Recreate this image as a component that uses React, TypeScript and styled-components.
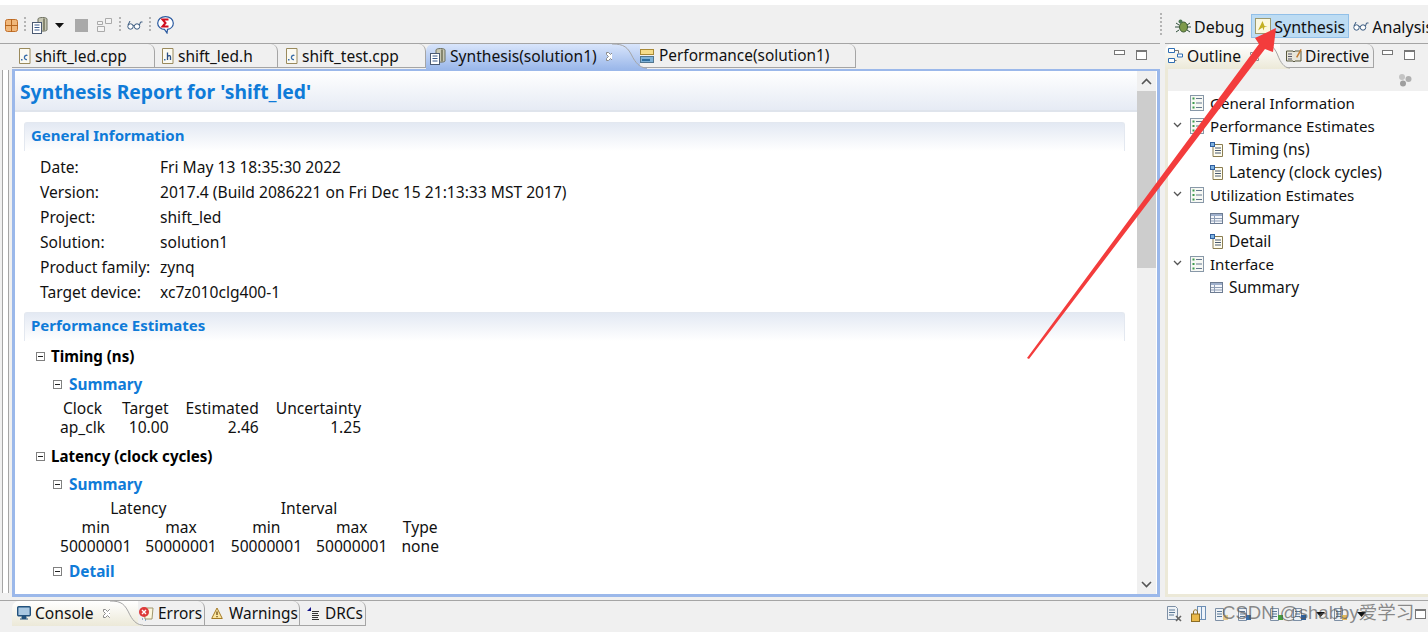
import React from "react";
import styled, { createGlobalStyle } from "styled-components";

const Global = createGlobalStyle`
  html, body { margin: 0; padding: 0; background: #fff; overflow: hidden; }
  * { box-sizing: border-box; }
`;

const FONT = `"Noto Sans", "Open Sans", "Noto Sans CJK SC", sans-serif`;

const Page = styled.div`
  position: relative;
  width: 1428px;
  height: 632px;
  overflow: hidden;
  display: flex;
  flex-direction: column;
  background: #f0f0f0;
  font-family: ${FONT};
  font-size: 15.6px;
  color: #111;
`;
const TopGap = styled.div`height: 5px; background: #fff; flex: none;`;
const Toolbar = styled.div`
  height: 38px; flex: none; display: flex; align-items: center; padding: 2px 0 0 5px;
`;
const ToolGroup = styled.div`display: flex; align-items: center; gap: 6px; height: 100%;`;
const Grip = styled.span`
  width: 2px; height: ${p => p.$h ?? 16}px; flex: none;
  background: repeating-linear-gradient(#b4b4b4 0 2px, transparent 2px 4px);
`;
const Nudge = styled.span`display: flex; align-items: center; margin-left: ${p => p.$l}px;`;
const Perspectives = styled.div`
  margin-left: auto; display: flex; align-items: center; height: 100%; width: 268px;
`;
const Persp = styled.div`
  display: flex; align-items: center; gap: 3px; height: 24px; flex: none; white-space: nowrap; font-size: 16px;
  padding: 0 ${p => p.$pad ?? 1}px;
  margin-left: ${p => p.$ml ?? 0}px;
  margin-top: 1px;
  ${p => p.$on ? "background:#bddcf3;border:1px solid #92c0e8;" : ""}
`;
const PerspLabel = styled.span`padding-top: 3px;`;
const Main = styled.div`flex: 1; display: flex; min-height: 0;`;
const LeftSliver = styled.div`
  width: 12px; flex: none; border-top: 1px solid #a5a5a5;
  position: relative; background: #f0f0f0;
  &::after { content: ""; position: absolute; left: 2px; top: 26px; bottom: 4px; width: 5px;
    border-left: 1px solid #a5a5a5; border-right: 1px solid #a5a5a5; background:#fff; }
`;
const Editor = styled.div`
  width: 1148px; flex: none; display: flex; flex-direction: column;
`;
const TabBar = styled.div`
  height: 26px; flex: none; display: flex; align-items: stretch; position: relative;
  border-top: 1px solid #a5a5a5;
  background: #f0f0f0;
`;
const Tab = styled.div`
  width: ${p => p.$w}px; flex: none; display: flex; align-items: center; gap: ${p => p.$gap ?? 4}px;
  padding-left: ${p => p.$pl ?? 6}px; white-space: nowrap; font-size: ${p => p.$size ?? 15.6}px; height: 24px;
  border-right: 1px solid #a5a5a5; border-bottom: 1px solid #a5a5a5; border-top-right-radius: 7px;
`;
const ActiveTab = styled.div`
  width: ${p => p.$w}px; flex: none; display: flex; align-items: center; gap: 3px; padding: 0 0 1px ${p => p.$pl ?? 4}px;
  white-space: nowrap; font-size: 15.6px; position: relative; height: 25px;
  border-top-left-radius: 7px; 
  background: linear-gradient(${p => p.$from}, ${p => p.$to});
`;
const CurveSvg = styled.svg`position: absolute; right: ${p => p.$r}px; top: 0;`;
const Close = styled.svg`flex: none; margin-left: 5px;`;
const WinBtns = styled.div`
  margin-left: auto; display: flex; align-items: center; gap: 11px; padding-right: 13px; height: 22px;
`;
const MinBtn = styled.span`width: 11px; height: 5px; border: 1px solid #777; background: #fff; display:block; margin-top:-5px;`;
const MaxBtn = styled.span`width: 11px; height: 10px; border: 1px solid #777; border-top-width: 2px; background:#fff; display:block; flex: none;`;
const EditorBody = styled.div`
  flex: 1; min-height: 0; display: flex; border: 3px solid #9bb8ea; border-top-width: 2px; background: #fff;
`;
const Report = styled.div`flex: 1; min-width: 0; overflow: hidden; background: #fff;`;
const Scrollbar = styled.div`
  width: 19px; flex: none; background: #f0f0f0; display: flex; flex-direction: column; align-items: center; margin-right: 1px;
`;
const ScrollBtn = styled.div`height: 20px; display: flex; align-items: center; justify-content: center; flex: none;`;
const Thumb = styled.div`width: 19px; height: 177px; background: #cdcdcd; flex: none;`;
const Spacer = styled.div`flex: 1;`;
const ReportTitle = styled.h1`
  margin: 0; height: 41px; padding: 1px 0 0 5px; display: flex; align-items: center;
  font-size: 19.3px; font-weight: 700; color: #0f7bd8;
  background: linear-gradient(#fff, #e6ebf4);
  border-bottom: 2px solid #dfe4ec; 
`;
const Section = styled.section`padding: 0 12px 0 9px; margin-top: 10px;`;
const SectionHead = styled.h2`
  margin: 0; height: 29px; padding: 0 0 4px 6px; display: flex; align-items: center;
  font-size: 15px; font-weight: 700; color: #0f7bd8;
  border: 1px solid #e3e8f0; border-bottom: none; border-radius: 3px 3px 0 0;
  background: linear-gradient(#e3e9f3, #fff);
`;
const InfoGrid = styled.div`
  display: grid; grid-template-columns: 120px auto; grid-auto-rows: 25px; align-items: center;
  padding: 3px 0 8px 16px; 
`;
const Span = styled.span`white-space: nowrap;`;
const Heading = styled.div`
  display: flex; align-items: center; gap: ${p => p.$blue ? 7 : 6}px; font-weight: 700; font-size: ${p => p.$blue ? 15.4 : 15.1}px; white-space: nowrap;
  height: 20px; margin-left: ${p => p.$ml}px; margin-top: ${p => p.$mt}px;
  color: ${p => p.$blue ? "#0f7bd8" : "#000"};
`;
const Toggle = styled.span`
  width: 9px; height: 9px; border: 1px solid #808080; position: relative; flex: none; background: #fff;
  &::after { content: ""; position: absolute; left: 1px; right: 1px; top: 3px; height: 1px; background: #222; }
`;
const DataTable = styled.table`
  border-collapse: separate; border-spacing: 0; margin: ${p => p.$mt}px 0 0 45px; font-size: 15.6px; line-height: 19px;
  th { font-weight: 400; text-align: center; padding: 0 0 0 ${p => p.$sp}px; white-space: nowrap; }
  td { text-align: right; padding: 0 0 0 ${p => p.$sp}px; white-space: nowrap; }
  th:first-child, td:first-child { padding-left: 0; }
  td.c { text-align: center; }
`;
const Sash = styled.div`width: 5px; flex: none;`;
const Side = styled.div`flex: 1; min-width: 0; display: flex; flex-direction: column;`;
const SideBody = styled.div`
  flex: 1; min-height: 0; display: flex; flex-direction: column; background: #fff;
  border-left: 3px solid #ece9d8; border-bottom: 3px solid #ece9d8; 
`;
const SideTools = styled.div`
  height: 22px; flex: none; background: #f0f0f0; display: flex; align-items: center; justify-content: flex-end; padding-right: 16px;
`;
const Tree = styled.ul`list-style: none; margin: 0; padding: 0;`;
const TreeRow = styled.li`
  height: 23px; display: flex; align-items: center; gap: 6px; white-space: nowrap;
  padding: ${p => p.$sub ? 1 : 0}px 0 0 ${p => p.$sub ? 42 : 22}px; position: relative; font-size: ${p => p.$sub ? 15.5 : 15.1}px;
`;
const Chevron = styled.svg`position: absolute; left: 5px; top: 8px;`;
const Bottom = styled.div`
  height: 32px; flex: none; display: flex; border-top: 1px solid #a5a5a5; background: #f0f0f0; padding-left: 12px; margin-top: 3px;
  position: relative; 
`;
const BottomTabs = styled.div`display: flex; height: 26px; align-items: flex-start;`;
const BottomTab = styled(Tab)`height: 25px; gap: ${p => p.$gap ?? 4}px; padding-left: ${p => p.$pl ?? 3}px; font-size: 15.4px;`;
const BottomIcons = styled.div`margin-left: 801px; display: flex; align-items: center; gap: 9px; height: 26px; flex: none;`;
const Watermark = styled.div`
  position: absolute; left: 1222px; top: -1px; font-size: 18.6px; line-height: 25px; color: rgba(90,90,90,.7); white-space: nowrap;
  font-family: "Liberation Sans", "Noto Sans CJK SC", sans-serif;
`;
const ArrowLayer = styled.svg`position: absolute; left: 0; top: 0; pointer-events: none;`;

const FileIcon = ({ l }: { l: "c" | "h" }) => (
  <svg width="13" height="16" viewBox="0 0 13 16">
    <path d="M1.500.5h10.500v15h-10.500z" fill="#fbfaf2" stroke="#9a8a5c" />
    {l === "c" ? <path d="M9.500 7.500c-3.500-1.400-4.500 4.500-.5 4" fill="none" stroke="#3a6ea8" strokeWidth="1.300" /> : <path d="M6.500 4.500v7.500m0-3.500c2-1.500 3-.7 3 .5v3" fill="none" stroke="#2a4f86" strokeWidth="1.300" />}
    <rect x="3" y="11" width="1.500" height="1.500" fill="#3a6ea8" />
  </svg>
);
const SynthIcon = () => (
  <svg width="17" height="18" viewBox="0 0 17 18">
    <path d="M6 3c0-2 9-2 9 0v11c0 1.500-9 1.500-9 0z" fill="#c8c8b6" stroke="#6d705f" />
    <path d="M12 2.500v12" stroke="#85866f" strokeWidth="2" />
    <rect x=".5" y="6.500" width="9" height="11" fill="#fff" stroke="#4b5a72" />
    <path d="M2.500 9h5M2.500 11.500h5M2.500 14h5" stroke="#3b5b8c" />
  </svg>
);
const PerfIcon = () => (
  <svg width="14" height="14" viewBox="0 0 14 14">
    <rect x=".5" y=".5" width="13" height="5" fill="#f6dd8a" stroke="#a98a36" />
    <rect x=".5" y="7.500" width="13" height="6" fill="#7fb2d8" stroke="#51768f" />
    <rect x="2" y="10" width="8" height="2" fill="#2f6f9f" />
  </svg>
);
const CloseIcon = () => (
  <Close width="11" height="11" viewBox="0 0 11 11">
    <path d="M1.500 1.500l2 0 2 2 2-2 2 0 0 2-2 2 2 2 0 2-2 0-2-2-2 2-2 0 0-2 2-2-2-2z" fill="#fff" stroke="#8b8b8b" />
  </Close>
);
const OutlineIcon = () => (
  <svg width="16" height="16" viewBox="0 0 16 16">
    <path d="M.5.5h6v4h-6z M.5 10.500h6v4h-6z M9.500 6h5v3h-5z" fill="#fff" stroke="#2f6fb5" />
    <path d="M6.500 2.500h4v3M6.500 12.500h2" fill="none" stroke="#777" />
  </svg>
);
const DirectiveIcon = () => (
  <svg width="16" height="15" viewBox="0 0 16 15">
    <path d="M.5 3h6.500l1 1 1-1h6v10h-6l-1 1-1-1h-6.500z" fill="#e8e6da" stroke="#59583f" />
    <path d="M2 6h4M2 8.500h4M2 11h4" stroke="#556" />
    <path d="M10 9l4.500-8 1.300.8-4.500 8z" fill="#c57d32" />
  </svg>
);
const ListIcon = () => (
  <svg width="14" height="16" viewBox="0 0 14 16">
    <rect x=".5" y=".5" width="13" height="15" fill="#f7f8f4" stroke="#8898a8" />
    <path d="M2.500 3.500h2M2.500 8h2M2.500 12.500h2" stroke="#3d9a4c" strokeWidth="2" />
    <path d="M6 3.500h6M6 8h6M6 12.500h6" stroke="#65788e" />
  </svg>
);
const DocIcon = () => (
  <svg width="13" height="15" viewBox="0 0 13 15">
    <path d="M3 2.500h9.500v12h-9.500z" fill="#fffdf0" stroke="#8a7d50" />
    <rect x=".5" y=".5" width="4" height="4" fill="#7fb2e0" stroke="#2f5f9f" />
    <path d="M5 6h6M5 8.500h6M5 11h6" stroke="#4a5a70" />
  </svg>
);
const TableIcon = () => (
  <svg width="13" height="11" viewBox="0 0 13 11">
    <rect x=".5" y=".5" width="12" height="10" fill="#f4f6fa" stroke="#6d7c92" />
    <rect x="1" y="1" width="11" height="2" fill="#9fb0cc" />
    <path d="M1 5.500h11M1 8h11M4.500 3v7" stroke="#8d9db5" />
  </svg>
);
const ChevronDown = () => (
  <Chevron width="9" height="6" viewBox="0 0 9 6"><path d="M1 1l3.500 3.500 3.500-3.500" fill="none" stroke="#555" strokeWidth="1.300" /></Chevron>
);
const GridIcon = () => (
  <svg width="13" height="13" viewBox="0 0 13 13">
    <rect x=".5" y=".5" width="12" height="12" rx="2" fill="#f0b77a" stroke="#c2702a" />
    <path d="M6.500 0v13M0 6.500h13" stroke="#b5651d" />
  </svg>
);
const Caret = () => <svg width="9" height="5" viewBox="0 0 9 5"><path d="M0 0h9L4.500 5z" fill="#111" /></svg>;
const StopIcon = () => <svg width="13" height="13"><rect width="13" height="13" fill="#a9a9a9" /></svg>;
const StepIcon = () => (
  <svg width="16" height="16" viewBox="0 0 16 16">
    <path d="M8.500 1.500h6v5h-6zM.5 9.500h7v5h-7zM.5 4.500h5v3h-5z" fill="#f4f4f4" stroke="#aaa" />
  </svg>
);
const GlassesIcon = () => (
  <svg width="16" height="10" viewBox="0 0 16 10">
    <circle cx="3.500" cy="6.500" r="2.700" fill="#fff" stroke="#38597f" />
    <circle cx="10" cy="6.500" r="2.700" fill="#fff" stroke="#38597f" />
    <path d="M6 6c.5-.8 1-.8 1.500 0M12.500 5l1-3 2 0M1 5l2-4" fill="none" stroke="#38597f" />
  </svg>
);
const SigmaBubble = () => (
  <svg width="17" height="18" viewBox="0 0 17 18">
    <path d="M8.500.7c4.500 0 7.800 2.800 7.800 6.500 0 3.400-2.700 5.800-5.800 6.200l-.5 3.600-2.500-3.600C4 13.300.7 10.800.7 7.200.7 3.500 4 .7 8.500.7z" fill="#fff" stroke="#2a5aa0" strokeWidth="1.200" />
    <path d="M11.500 3.500h-6l3 3.500-3 3.500h6" fill="none" stroke="#d01020" strokeWidth="2" />
  </svg>
);
const BugIcon = () => (
  <svg width="16" height="16" viewBox="0 0 16 16">
    <ellipse cx="8.500" cy="9" rx="4" ry="5" fill="#7d9a4b" stroke="#3e5a32" />
    <circle cx="5.500" cy="3.500" r="2" fill="#4f7a55" />
    <path d="M1 5l3 2M0 9h4M1 14l3-2M15 5l-3 2M16 9h-4M15 14l-3-2" stroke="#2f4f3a" />
  </svg>
);
const HlsIcon = () => (
  <svg width="16" height="16" viewBox="0 0 16 16">
    <rect x=".5" y=".5" width="15" height="15" fill="#fbf8df" stroke="#9d9a70" />
    <path d="M3 12.500L7.500 3l2 5 3 .5-3 .5-1 3.500-1-3z" fill="#c3b023" />
  </svg>
);
const ClusterIcon = () => (
  <svg width="14" height="14" viewBox="0 0 14 14">
    <circle cx="4" cy="4" r="3" fill="#c4c4c4" /><circle cx="10.500" cy="6" r="3" fill="#b0b0b0" /><circle cx="5" cy="10.500" r="3" fill="#9e9e9e" />
  </svg>
);
const ConsoleIcon = () => (
  <svg width="14" height="14" viewBox="0 0 14 14">
    <rect x=".7" y=".7" width="12.600" height="9" rx="1" fill="#a9c8e2" stroke="#22527d" strokeWidth="1.400" />
    <path d="M3 13h8M5 10.500h4v2h-4z" stroke="#22527d" fill="#22527d" />
  </svg>
);
const ErrorIcon = () => (
  <svg width="16" height="17" viewBox="0 0 16 17">
    <path d="M6 3h9l-1 11H7z" fill="#fbf7df" stroke="#a0966c" />
    <circle cx="6" cy="7" r="5" fill="#dd3a3a" />
    <path d="M4 5l4 4M8 5l-4 4" stroke="#fff" strokeWidth="1.400" />
    <path d="M4 14h1M7 15h1" stroke="#3a6ea8" />
  </svg>
);
const WarnIcon = () => (
  <svg width="12" height="13" viewBox="0 0 12 13">
    <path d="M6 1l5.300 10.500H.7z" fill="#fbe6a0" stroke="#a47a24" strokeLinejoin="round" />
    <path d="M6 4.500v3.500M6 9v1.300" stroke="#6b4a12" strokeWidth="1.300" />
  </svg>
);
const DrcIcon = () => (
  <svg width="14" height="13" viewBox="0 0 14 13">
    <path d="M1 4L5 0v4z" fill="#14148a" />
    <path d="M6 4.500h7M6 6.500h6M6 8.500h7M6 10.500h6M6 12.500h7" stroke="#333" />
  </svg>
);
const ArrowUp = () => <svg width="11" height="7" viewBox="0 0 11 7"><path d="M1 6l4.500-4.500L10 6" fill="none" stroke="#555" strokeWidth="1.600" /></svg>;
const ArrowDown = () => <svg width="11" height="7" viewBox="0 0 11 7"><path d="M1 1l4.500 4.500L10 1" fill="none" stroke="#555" strokeWidth="1.600" /></svg>;
const ClearIcon = () => (
  <svg width="15" height="16" viewBox="0 0 15 16">
    <path d="M.5.5h8l2 2v11h-10z" fill="#eef2f6" stroke="#7d8fa5" />
    <path d="M2 4h6M2 6.500h6M2 9h5" stroke="#5a7896" />
    <path d="M9 10l5 5M14 10l-5 5" stroke="#666" strokeWidth="1.600" />
  </svg>
);
const LockIcon = () => (
  <svg width="15" height="16" viewBox="0 0 15 16">
    <rect x="6.500" y=".5" width="8" height="13" fill="#eef3f9" stroke="#6d8fb5" />
    <path d="M10.500 1v12" stroke="#6d8fb5" />
    <path d="M2.500 8V6c0-3 4-3 4 0v2" fill="none" stroke="#8b6d25" />
    <rect x=".5" y="8" width="8" height="7.500" fill="#eab94a" stroke="#8b6d25" />
  </svg>
);
const MiniDoc = ({ c }: { c: string }) => (
  <svg width="14" height="15" viewBox="0 0 14 15">
    <path d="M.5 1.500h8v12h-8z" fill="#eef2f6" stroke="#7d8fa5" />
    <path d="M2 4.500h5M2 7h5M2 9.500h5" stroke="#5a7896" />
    <rect x="8" y="8" width="5" height="5" fill={c} />
  </svg>
);

const Curve = ({ w, h, r, from, to }: { w: number; h: number; r: number; from: string; to: string }) => (
  <CurveSvg $r={r} width={w} height={h} viewBox={`0 0 ${w} ${h}`}>
    <defs>
      <linearGradient id={`g${from.slice(1)}`} x1="0" y1="0" x2="0" y2="1"><stop offset="0" stopColor={from} /><stop offset="1" stopColor={to} /></linearGradient>
    </defs>
    <path d={`M0 0 C${w * .35} 0 ${w * .45} 3 ${w * .6} ${h * .55} C${w * .72} ${h * .85} ${w * .85} ${h - 1} ${w} ${h - 1}V${h}H0z`} fill={`url(#g${from.slice(1)})`} />
    <path d={`M0 0 C${w * .35} 0 ${w * .45} 3 ${w * .6} ${h * .55} C${w * .72} ${h * .85} ${w * .85} ${h - 1} ${w} ${h - 1}`} fill="none" stroke="#a5a5a5" />
  </CurveSvg>
);

const info = [
  ["Date:", "Fri May 13 18:35:30 2022"],
  ["Version:", "2017.4 (Build 2086221 on Fri Dec 15 21:13:33 MST 2017)"],
  ["Project:", "shift_led"],
  ["Solution:", "solution1"],
  ["Product family:", "zynq"],
  ["Target device:", "xc7z010clg400-1"],
];
const tree: { t: string; kind: "list" | "doc" | "table"; open?: boolean }[] = [
  { t: "General Information", kind: "list" },
  { t: "Performance Estimates", kind: "list", open: true },
  { t: "Timing (ns)", kind: "doc" },
  { t: "Latency (clock cycles)", kind: "doc" },
  { t: "Utilization Estimates", kind: "list", open: true },
  { t: "Summary", kind: "table" },
  { t: "Detail", kind: "doc" },
  { t: "Interface", kind: "list", open: true },
  { t: "Summary", kind: "table" },
];

export default function App() {
  return (
    <Page>
      <Global />
      <TopGap />
      <Toolbar>
        <ToolGroup>
          <GridIcon />
          <Grip />
          <SynthIcon />
          <Caret />
          <Nudge $l={5}><StopIcon /></Nudge>
          <Nudge $l={3}><StepIcon /></Nudge>
          <Grip />
          <GlassesIcon />
          <Grip />
          <SigmaBubble />
        </ToolGroup>
        <Perspectives>
          <Grip $h={24} />
          <Persp $ml={12}><BugIcon /><PerspLabel>Debug</PerspLabel></Persp>
          <Persp $on $ml={6} $pad={3}><HlsIcon /><PerspLabel>Synthesis</PerspLabel></Persp>
          <Persp $ml={3}><GlassesIcon /><PerspLabel>Analysis</PerspLabel></Persp>
        </Perspectives>
      </Toolbar>
      <Main>
        <LeftSliver />
        <Editor>
          <TabBar>
            <Tab $w={143} $size={15.5}><FileIcon l="c" />shift_led.cpp</Tab>
            <Tab $w={123} $size={15.5}><FileIcon l="h" />shift_led.h</Tab>
            <Tab $w={148} $size={15.5} $pl={7}><FileIcon l="c" />shift_test.cpp</Tab>
            <ActiveTab $w={214} $from="#d9e5fb" $to="#9bb8ea">
              <SynthIcon />Synthesis(solution1)<CloseIcon />
              <Curve w={35} h={25} r={-7} from="#d9e5fb" to="#9bb8ea" />
            </ActiveTab>
            <Tab $w={216} $pl={0} $gap={5} $size={15.4}><PerfIcon />Performance(solution1)</Tab>
            <WinBtns><MinBtn /><MaxBtn /></WinBtns>
          </TabBar>
          <EditorBody>
            <Report>
              <ReportTitle>Synthesis Report for 'shift_led'</ReportTitle>
              <Section>
                <SectionHead>General Information</SectionHead>
                <InfoGrid>
                  {info.map(([k, v]) => (
                    <React.Fragment key={k}><Span>{k}</Span><Span>{v}</Span></React.Fragment>
                  ))}
                </InfoGrid>
                <SectionHead>Performance Estimates</SectionHead>
              </Section>
              <Heading $ml={21} $mt={5}><Toggle />Timing (ns)</Heading>
              <Heading $ml={38} $mt={8} $blue><Toggle />Summary</Heading>
              <DataTable $mt={5} $sp={17}>
                <thead><tr><th>Clock</th><th>Target</th><th>Estimated</th><th>Uncertainty</th></tr></thead>
                <tbody><tr><td>ap_clk</td><td>10.00</td><td>2.46</td><td>1.25</td></tr></tbody>
              </DataTable>
              <Heading $ml={21} $mt={9}><Toggle />Latency (clock cycles)</Heading>
              <Heading $ml={38} $mt={8} $blue><Toggle />Summary</Heading>
              <DataTable $mt={5} $sp={14}>
                <thead>
                  <tr><th colSpan={2}>Latency</th><th colSpan={2}>Interval</th><th></th></tr>
                  <tr><th>min</th><th>max</th><th>min</th><th>max</th><th>Type</th></tr>
                </thead>
                <tbody><tr><td>50000001</td><td>50000001</td><td>50000001</td><td>50000001</td><td className="c">none</td></tr></tbody>
              </DataTable>
              <Heading $ml={38} $mt={5} $blue><Toggle />Detail</Heading>
            </Report>
            <Scrollbar>
              <ScrollBtn><ArrowUp /></ScrollBtn>
              <Thumb />
              <Spacer />
              <ScrollBtn><ArrowDown /></ScrollBtn>
            </Scrollbar>
          </EditorBody>
        </Editor>
        <Sash />
        <Side>
          <TabBar>
            <ActiveTab $w={115} $pl={3} $from="#ffffff" $to="#ece9d8">
              <OutlineIcon />Outline<CloseIcon />
              <Curve w={28} h={25} r={-10} from="#ffffff" to="#ece9d8" />
            </ActiveTab>
            <Tab $w={94} $pl={6} $gap={3}><DirectiveIcon />Directive</Tab>
            <WinBtns><MinBtn /><MaxBtn /></WinBtns>
          </TabBar>
          <SideBody>
            <SideTools><ClusterIcon /></SideTools>
            <Tree>
              {tree.map((r, i) => (
                <TreeRow key={i} $sub={r.kind !== "list"}>
                  {r.open && <ChevronDown />}
                  {r.kind === "list" ? <ListIcon /> : r.kind === "doc" ? <DocIcon /> : <TableIcon />}
                  {r.t}
                </TreeRow>
              ))}
            </Tree>
          </SideBody>
        </Side>
      </Main>
      <Bottom>
        <BottomTabs>
          <ActiveTab $w={126} $from="#ffffff" $to="#ece9d8" $pl={5}>
            <ConsoleIcon /><Nudge $l={1}>Console</Nudge><CloseIcon />
            <Curve w={33} h={25} r={-5} from="#ffffff" to="#ece9d8" />
          </ActiveTab>
          <BottomTab $w={67} $pl={0}><ErrorIcon />Errors</BottomTab>
          <BottomTab $w={95} $pl={6} $gap={6}><WarnIcon />Warnings</BottomTab>
          <BottomTab $w={66} $pl={6} $gap={5}><DrcIcon />DRCs</BottomTab>
        </BottomTabs>
        <BottomIcons>
          <ClearIcon />
          <LockIcon />
          <MiniDoc c="#e4c98a" />
          <MiniDoc c="#3a6ea8" />
          <Nudge $l={9}><MiniDoc c="#46a03c" /></Nudge>
          <MiniDoc c="#2c5f9e" />
          <Caret />
          <MiniDoc c="#e2b85a" />
          <Caret />
          <Nudge $l={40}><MaxBtn /></Nudge>
        </BottomIcons>
        <Watermark>CSDN @shabby爱学习</Watermark>
      </Bottom>
      <ArrowLayer width="1428" height="632" viewBox="0 0 1428 632">
        <path d="M1027 358L1259 44 1255 38 1276 28 1273 52 1265 49 1029 359z" fill="#f33c3c" />
      </ArrowLayer>
    </Page>
  );
}
